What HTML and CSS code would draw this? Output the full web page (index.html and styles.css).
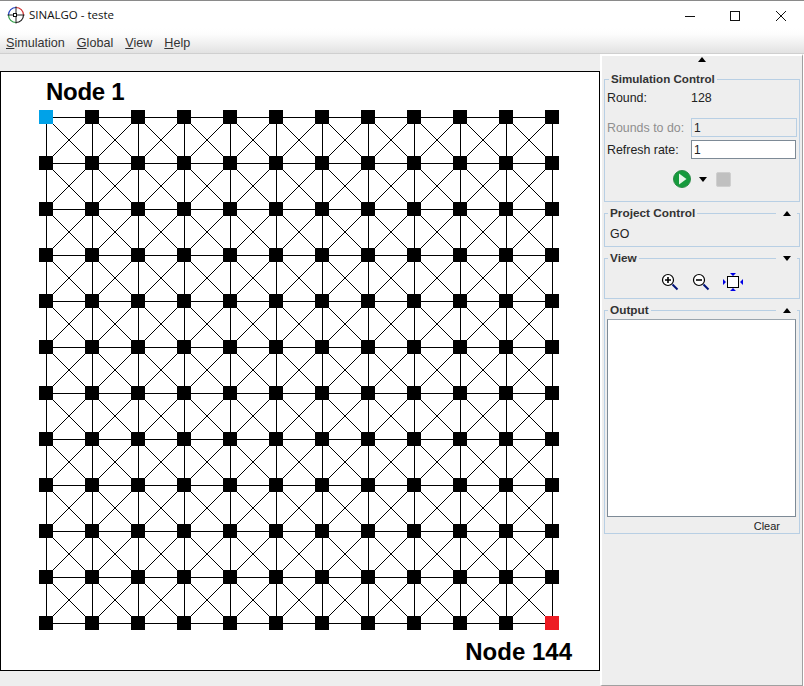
FILE: index.html
```html
<!DOCTYPE html>
<html lang="en">
<head>
    <meta charset="UTF-8">
    <meta name="viewport" content="width=device-width, initial-scale=1.0">
    <title>SINALGO - teste</title>
    <link rel="stylesheet" href="styles.css">
</head>
<body>
    <div class="window">
        <header class="titlebar">
            <svg class="app-icon" width="18" height="18" viewBox="0 0 18 18">
                <path d="M9 1.5A7.5 7.5 0 0 1 16.5 9" fill="none" stroke="#d03030" stroke-width="1.2"/>
                <path d="M16.5 9A7.5 7.5 0 0 1 9 16.5" fill="none" stroke="#222" stroke-width="1.2"/>
                <path d="M9 16.5A7.5 7.5 0 0 1 1.5 9" fill="none" stroke="#2f9e44" stroke-width="1.2"/>
                <path d="M1.5 9A7.5 7.5 0 0 1 9 1.5" fill="none" stroke="#1f3fbf" stroke-width="1.2"/>
                <path d="M9 .5v17M.5 9h17" stroke="#222" stroke-width="1"/>
                <rect x="6.5" y="7.5" width="3" height="3" fill="#fff" stroke="#111"/>
            </svg>
            <span class="app-title">SINALGO - teste</span>
            <div class="window-buttons">
                <svg class="win-btn" width="46" height="28" viewBox="0 0 46 28"><path d="M18 16.5h10" stroke="#111"/></svg>
                <svg class="win-btn" width="46" height="28" viewBox="0 0 46 28"><rect x="17.5" y="11.5" width="9" height="9" fill="none" stroke="#111"/></svg>
                <svg class="win-btn" width="46" height="28" viewBox="0 0 46 28"><path d="M17 11l10 10M27 11L17 21" stroke="#111"/></svg>
            </div>
        </header>

        <nav class="menubar">
            <span class="menu-item"><u>S</u>imulation</span>
            <span class="menu-item"><u>G</u>lobal</span>
            <span class="menu-item"><u>V</u>iew</span>
            <span class="menu-item"><u>H</u>elp</span>
        </nav>

        <div class="content">
            <main class="stage">
                <div class="canvas">
                    <svg class="graph" width="598" height="598" viewBox="0 0 598 598" shape-rendering="crispEdges">
                        <defs>
                            <pattern id="edges" x="45" y="45" width="46" height="46" patternUnits="userSpaceOnUse">
                                <path d="M0 .5h46M.5 0v46" stroke="#000" fill="none"/>
                                <path d="M0 0l46 46M46 0L0 46" stroke="#000" fill="none"/>
                            </pattern>
                            <pattern id="nodes" x="38" y="38" width="46" height="46" patternUnits="userSpaceOnUse">
                                <rect width="14" height="14" fill="#000"/>
                            </pattern>
                        </defs>
                        <rect x="45" y="45" width="507" height="507" fill="url(#edges)"/>
                        <rect x="38" y="38" width="520" height="520" fill="url(#nodes)"/>
                        <rect x="38" y="38" width="14" height="14" fill="#00a2e8"/>
                        <rect x="544" y="544" width="14" height="14" fill="#ed1c24"/>
                    </svg>
                    <span class="node-label first">Node 1</span>
                    <span class="node-label last">Node 144</span>
                </div>
            </main>

            <aside class="side">
                <div class="collapse-top"><span class="arrow up"></span></div>

                <fieldset class="group sim">
                    <legend>Simulation Control</legend>
                    <div class="form-row round-row"><span>Round:</span><span>128</span></div>
                    <div class="form-row muted"><label>Rounds to do:</label><input class="num" type="text" value="1" disabled></div>
                    <div class="form-row"><label>Refresh rate:</label><input class="num live" type="text" value="1"></div>
                    <div class="run-buttons">
                        <svg width="20" height="20" viewBox="0 0 20 20">
                            <circle cx="10" cy="10" r="8.5" fill="#159a3c" stroke="#2b8a46"/>
                            <path d="M7 4.5L14.5 10 7 15.5z" fill="#e6f5e8"/>
                        </svg>
                        <span class="arrow down drop"></span>
                        <span class="stop-btn"></span>
                    </div>
                </fieldset>

                <fieldset class="group project">
                    <legend>Project Control</legend>
                    <span class="toggle"><span class="arrow up"></span></span>
                    <div class="project-name">GO</div>
                </fieldset>

                <fieldset class="group view">
                    <legend>View</legend>
                    <span class="toggle"><span class="arrow down"></span></span>
                    <div class="view-buttons">
                        <svg width="18" height="18" viewBox="0 0 18 18">
                            <circle cx="7" cy="7" r="5.5" fill="#fff" stroke="#000" stroke-width="1.2"/>
                            <path d="M4 7h6M7 4v6" stroke="#000" stroke-width="1.6"/>
                            <path d="M11.5 11.5l5 5" stroke="#00127a" stroke-width="2"/>
                        </svg>
                        <svg width="18" height="18" viewBox="0 0 18 18">
                            <circle cx="7" cy="7" r="5.5" fill="#fff" stroke="#000" stroke-width="1.2"/>
                            <path d="M4 7h6" stroke="#000" stroke-width="1.6"/>
                            <path d="M11.5 11.5l5 5" stroke="#00127a" stroke-width="2"/>
                        </svg>
                        <svg width="20" height="18" viewBox="0 0 20 18">
                            <rect x="4.5" y="3.5" width="11" height="11" fill="#fff" stroke="#000"/>
                            <path d="M7 0h6l-3 3zM7 18h6l-3-3zM0 6v6l3-3zM20 6v6l-3-3z" fill="#0000e6"/>
                        </svg>
                    </div>
                </fieldset>

                <fieldset class="group output">
                    <legend>Output</legend>
                    <span class="toggle"><span class="arrow up"></span></span>
                    <div class="output-box"></div>
                    <div class="clear-row">Clear</div>
                </fieldset>
            </aside>
        </div>
    </div>
</body>
</html>
```

FILE: styles.css
```css
* {
    box-sizing: border-box;
}

html, body {
    height: 100%;
}

body {
    margin: 0;
    background-color: #fff;
    font-family: "Liberation Sans", Arial, sans-serif;
    font-size: 12.4px;
    color: #222;
    overflow: hidden;
}

.window {
    display: flex;
    flex-direction: column;
    height: 100vh;
}

/* Title bar */
.titlebar {
    display: flex;
    align-items: center;
    height: 28px;
    flex-shrink: 0;
    padding-left: 7px;
    background-color: #fff;
    border-top: 1px solid #8a8a8a;
}

.app-title {
    margin-left: 4px;
    font-family: "Open Sans", sans-serif;
    font-size: 11.5px;
    color: #111;
}

.window-buttons {
    display: flex;
    margin-left: auto;
    margin-right: -1px;
    margin-top: -1px;
}

.win-btn {
    display: block;
}

/* Menu bar */
.menubar {
    display: flex;
    gap: 12px;
    align-items: center;
    height: 26px;
    flex-shrink: 0;
    padding: 4px 0 0 6px;
    font-size: 12.6px;
    background-image: linear-gradient(#ffffff, #fdfdfd 25%, #e2e2e2);
    border-bottom: 1px solid #cfcfcf;
    color: #333;
}

.content {
    display: flex;
    flex-grow: 1;
    min-height: 0;
}

/* Graph area */
.stage {
    width: 600px;
    flex-shrink: 0;
    padding-top: 17px;
    background-color: #eeeeee;
}

.canvas {
    position: relative;
    width: 600px;
    height: 600px;
    background-color: #fff;
    border: 1px solid #000;
}

.graph {
    display: block;
}

.node-label {
    position: absolute;
    font-size: 24px;
    font-weight: bold;
    line-height: 28px;
    color: #000;
}

.node-label.first {
    left: 45px;
    top: 6px;
    letter-spacing: -0.3px;
}

.node-label.last {
    right: 27px;
    bottom: 4px;
}

/* Side panel */
.side {
    display: flex;
    flex-direction: column;
    gap: 4px;
    width: 203px;
    padding: 0 2px;
    background-color: #eeeeee;
    border-top: 2px solid #fff;
    border-left: 2px solid #fff;
    border-right: 1px solid #a0a0a0;
    border-bottom: 1px solid #a0a0a0;
}

.collapse-top {
    display: flex;
    justify-content: center;
    height: 12px;
    padding-top: 1px;
}

.arrow {
    display: block;
    width: 0;
    height: 0;
    border-left: 4px solid transparent;
    border-right: 4px solid transparent;
}

.arrow.up {
    border-bottom: 5px solid #000;
}

.arrow.down {
    border-top: 5px solid #000;
}

.group {
    position: relative;
    margin: 0;
    padding: 0 2px;
    min-width: 0;
    border: 1px solid #b8cfe4;
}

.group legend {
    margin-left: 1px;
    padding: 0 2px;
    font-size: 11.8px;
    font-weight: bold;
    line-height: 14px;
    color: #333;
}

.toggle {
    position: absolute;
    top: -11px;
    right: 2px;
    display: flex;
    align-items: center;
    justify-content: center;
    width: 21px;
    height: 8px;
    background-color: #eeeeee;
}

.sim {
    height: 130px;
}

.sim legend {
    margin-left: 2px;
    font-size: 11.6px;
}

.form-row {
    display: grid;
    grid-template-columns: 84px 106px;
    align-items: center;
    height: 19px;
    margin-bottom: 2px;
    color: #222;
}

.round-row {
    height: 14px;
    margin-top: 5px;
    margin-bottom: 13px;
}

.muted {
    margin-bottom: 3px;
    color: #8f8f8f;
}

.num {
    width: 106px;
    height: 19px;
    padding: 0 2px;
    font-family: inherit;
    font-size: 12px;
    color: #222;
    background-color: #fff;
    border: 1px solid #7d8a96;
    outline: none;
}

.num.live {
    width: 105px;
}

.num:disabled {
    background-color: #eeeeee;
    border-color: #b8cfe4;
}

.run-buttons {
    display: flex;
    align-items: center;
    justify-content: center;
    margin-top: 10px;
    padding-right: 2px;
}

.drop {
    margin: 1px 9px 0 7px;
}

.stop-btn {
    display: block;
    width: 15px;
    height: 15px;
    background-color: #c0c0c0;
    border: 1px solid #cfcfcf;
    border-radius: 2px;
}

.project {
    height: 41px;
}

.project-name {
    padding: 7px 0 0 3px;
}

.view {
    height: 48px;
}

.view-buttons {
    display: flex;
    justify-content: center;
    gap: 13px;
    padding-top: 8px;
}

.output {
    height: 231px;
}

.output-box {
    height: 198px;
    margin: 2px 1px 0 0;
    background-color: #fff;
    border: 1px solid #7d8a96;
    border-top-color: #9aa5ae;
}

.clear-row {
    padding: 3px 17px 0 0;
    text-align: right;
    font-size: 11px;
}
```
